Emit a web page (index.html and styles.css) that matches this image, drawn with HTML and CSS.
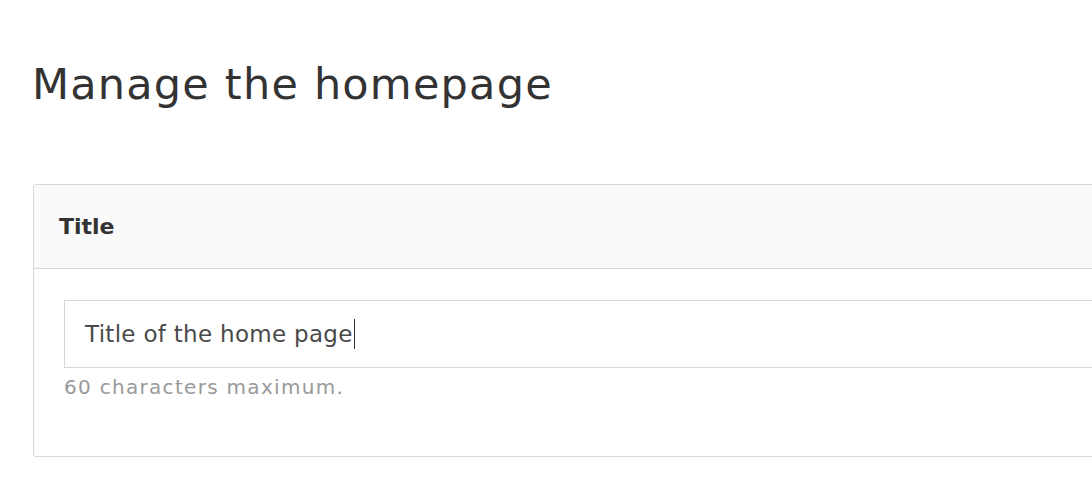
FILE: index.html
```html
<!DOCTYPE html>
<html>
<head>
<meta charset="utf-8">
<link rel="stylesheet" href="styles.css">
</head>
<body>
<div class="page">
  <h1 class="page-title">Manage the homepage</h1>
  <section class="card">
    <header class="card-header">
      <h2 class="card-title">Title</h2>
    </header>
    <div class="card-body">
      <div class="input"><span class="input-text">Title of the home page</span><span class="caret"></span></div>
      <p class="help">60 characters maximum.</p>
    </div>
  </section>
</div>
</body>
</html>
```
FILE: styles.css
```css
html, body {
  margin: 0;
  padding: 0;
  background: #fff;
  overflow: hidden;
}
body {
  font-family: "DejaVu Sans", "Inter", sans-serif;
  color: #333;
}
.page {
  width: 1200px;
  padding: 56px 0 0 32px;
}
.page-title {
  margin: 0;
  font-size: 43px;
  font-weight: 400;
  line-height: 56px;
  color: #333;
  letter-spacing: 1.2px;
}
.card {
  margin-top: 72px;
  margin-left: 1px;
  border: 1px solid #d8d8d8;
  border-radius: 3px;
  width: 1160px;
}
.card-header {
  background: #fafafa;
  border-bottom: 1px solid #d8d8d8;
  height: 83px;
  display: flex;
  align-items: center;
  padding-left: 25px;
}
.card-title {
  margin: 0;
  font-size: 22px;
  font-weight: 700;
  color: #333;
}
.card-body {
  padding: 31px 30px 56px 30px;
}
.input {
  height: 66px;
  border: 1px solid #d8d8d8;
  display: flex;
  align-items: center;
  padding-left: 20px;
}
.input-text {
  font-size: 23px;
  letter-spacing: 0.3px;
  color: #4a4a4a;
}
.caret {
  display: inline-block;
  width: 1.5px;
  height: 30px;
  background: #333;
  margin-left: 1px;
}
.help {
  margin: 6px 0 0 0;
  font-size: 20px;
  line-height: 26px;
  letter-spacing: 1.3px;
  color: #999;
}
```
